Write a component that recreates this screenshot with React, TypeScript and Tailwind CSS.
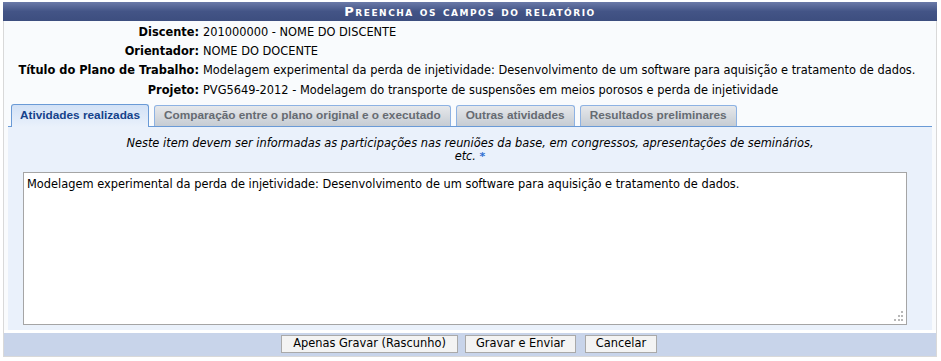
import React from 'react';

const info = [
  { label: 'Discente:', value: '201000000 - NOME DO DISCENTE' },
  { label: 'Orientador:', value: 'NOME DO DOCENTE' },
  { label: 'Título do Plano de Trabalho:', value: 'Modelagem experimental da perda de injetividade: Desenvolvimento de um software para aquisição e tratamento de dados.' },
  { label: 'Projeto:', value: 'PVG5649-2012 - Modelagem do transporte de suspensões em meios porosos e perda de injetividade' },
];

const tabs = [
  'Atividades realizadas',
  'Comparação entre o plano original e o executado',
  'Outras atividades',
  'Resultados preliminares',
];

export default function App() {
  return (
    <div className="w-[941px] h-[361px] bg-white pt-[2px] pl-[3px] font-['DejaVu_Sans',Verdana,sans-serif] text-[11.4px] text-black">
      <div className="w-[934px] border-x border-b border-[#d9d9d9]">
        {/* header */}
        <div className="h-[19px] -mx-px bg-gradient-to-b from-[#6b7aa8] via-[#435486] to-[#3d4e7f] flex items-center justify-center">
          <span className="text-white font-bold text-[13px] tracking-[1.5px] [font-variant:small-caps] leading-none">
            Preencha os campos do relatório
          </span>
        </div>

        <div className="bg-[#f9fbfd]">
          {/* info rows */}
          <div className="pt-[1.5px] pb-[4.5px]">
            {info.map(r => (
              <div key={r.label} className="flex h-[19.4px] items-center">
                <span className="w-[195px] shrink-0 text-right font-bold whitespace-nowrap">{r.label}</span>
                <span className="pl-[4px] whitespace-nowrap">{r.value}</span>
              </div>
            ))}
          </div>

          {/* tabs */}
          <div className="px-[4px]">
            <div className="flex items-end gap-[5px] pl-[3px] border-b border-[#6a9ad6] h-[22px] font-['Liberation_Sans',Arial,sans-serif] font-bold text-[11.8px]">
              {tabs.map((t, i) =>
                i === 0 ? (
                  <div
                    key={t}
                    className="h-[23px] -mb-px px-[8px] flex items-center rounded-t-[3px] border border-b-0 border-[#6a9ad6] bg-gradient-to-b from-[#d2e1f6] to-[#eaf1fb] text-[#15428b]"
                  >
                    {t}
                  </div>
                ) : (
                  <div
                    key={t}
                    className="h-[21px] px-[9px] flex items-center rounded-t-[3px] border border-b-0 border-[#8db2e3] bg-gradient-to-b from-[#e6e8eb] to-[#c6ccd3] text-[#666b72]"
                  >
                    {t}
                  </div>
                )
              )}
            </div>

            {/* panel */}
            <div className="bg-[#eaf1fb] h-[203px] pt-[10px]">
              <p className="italic text-center leading-[13px] text-black">
                Neste item devem ser informadas as participações nas reuniões da base, em congressos, apresentações de seminários,
                <br />
                etc. <span className="text-[#2f6fd1] text-[11px] font-bold not-italic align-top">*</span>
              </p>
              <div className="ml-[15px] mt-[9px] w-[884px] h-[153px] bg-white border border-[#a5a5a5] relative px-[3px] py-[3px]">
                <span className="whitespace-nowrap">
                  Modelagem experimental da perda de injetividade: Desenvolvimento de um software para aquisição e tratamento de dados.
                </span>
                <svg className="absolute right-[3px] bottom-[3px]" width="10" height="10" viewBox="0 0 10 10">
                  <g fill="#b8b8b8">
                    <rect x="8" y="0" width="2" height="2" />
                    <rect x="5" y="4" width="2" height="2" />
                    <rect x="8" y="4" width="2" height="2" />
                    <rect x="1" y="8" width="2" height="2" />
                    <rect x="5" y="8" width="2" height="2" />
                    <rect x="8" y="8" width="2" height="2" />
                  </g>
                </svg>
              </div>
            </div>
          </div>
          <div className="h-[3px] bg-white" />

          {/* footer */}
          <div className="h-[23px] bg-[#c8d4ea] flex items-center justify-center gap-[7px] pr-[2px]">
            <button className="h-[18px] w-[177px] bg-[#f3f3f3] border border-[#a9a9a9] leading-none">Apenas Gravar (Rascunho)</button>
            <button className="h-[18px] w-[111px] bg-[#f3f3f3] border border-[#a9a9a9] leading-none">Gravar e Enviar</button>
            <button className="h-[18px] w-[72px] ml-[2px] bg-[#f3f3f3] border border-[#a9a9a9] leading-none">Cancelar</button>
          </div>
        </div>
      </div>
    </div>
  );
}
